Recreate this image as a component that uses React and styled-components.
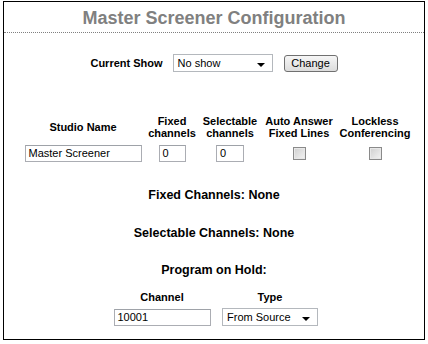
import React from "react";
import styled, { createGlobalStyle } from "styled-components";

const GlobalStyle = createGlobalStyle`
  body {
    margin: 0;
    background: #fff;
    font-family: "Liberation Sans", Arial, sans-serif;
    font-size: 11px;
    color: #000;
  }
`;

const Frame = styled.div`
  width: 420px;
  height: 337px;
  margin: 1px 0 0 3px;
  border: 1px solid #000;
  background: #fff;
`;

const Title = styled.h1`
  margin: 0;
  padding: 5px 0 3px;
  font-size: 18px;
  line-height: 22px;
  font-weight: bold;
  color: #808080;
  text-align: center;
  border-bottom: 1px dotted #808080;
`;

const ShowRow = styled.div`
  display: flex;
  justify-content: center;
  align-items: center;
  gap: 10px;
  margin-top: 21px;
  height: 18px;
`;

const Label = styled.span`
  font-weight: bold;
  font-size: 11px;
`;

const SelectBox = styled.div`
  position: relative;
  width: ${(p) => p.$width}px;
  height: 18px;
  box-sizing: border-box;
  border: 1px solid #b4b8bd;
  background: #fff;
  display: flex;
  align-items: center;
  padding-left: 4px;
  font-size: 11px;
`;

const Arrow = styled.span`
  position: absolute;
  right: 7px;
  top: 8px;
  width: 0;
  height: 0;
  border-left: 4px solid transparent;
  border-right: 4px solid transparent;
  border-top: 4px solid #000;
`;

const Button = styled.button`
  height: 17px;
  width: 54px;
  margin-left: 1px;
  padding: 0;
  font-family: inherit;
  font-size: 11px;
  color: #000;
  border: 1px solid #707070;
  border-radius: 3px;
  background: linear-gradient(#f6f6f6, #dcdcdc);
`;

const Grid = styled.div`
  display: grid;
  grid-template-columns: 126px 52px 64px 74px 78px;
  grid-template-rows: 26px 17px;
  row-gap: 5px;
  margin: 42px 0 0 16px;
  align-items: center;
  justify-items: center;
`;

const Head = styled.div`
  font-weight: bold;
  font-size: 11px;
  line-height: 12px;
  text-align: center;
`;

const TextInput = styled.div`
  width: ${(p) => p.$width}px;
  height: 17px;
  box-sizing: border-box;
  border: 1px solid #abadb3;
  border-top-color: #9ea2a8;
  background: #fff;
  padding-left: 3px;
  font-size: 11px;
  line-height: 15px;
`;

const Check = styled.span`
  width: 13px;
  height: 13px;
  box-sizing: border-box;
  border: 1px solid #8a8a8a;
  background: linear-gradient(135deg, #cfcfcf, #f4f4f4);
  box-shadow: inset 0 0 0 1px #e8e8e8;
`;

const Section = styled.h2`
  margin: ${(p) => p.$top}px 0 0;
  font-size: 12.5px;
  line-height: 16px;
  font-weight: bold;
  text-align: center;
`;

const HoldGrid = styled.div`
  display: grid;
  grid-template-columns: 108px 108px;
  grid-template-rows: 14px 18px;
  row-gap: 4px;
  justify-content: center;
  justify-items: center;
  align-items: center;
  margin: 12px 0 0 4px;
`;

export default function App() {
  return (
    <>
      <GlobalStyle />
      <Frame>
        <Title>Master Screener Configuration</Title>
        <ShowRow>
          <Label>Current Show</Label>
          <SelectBox $width={100}>
            No show
            <Arrow />
          </SelectBox>
          <Button>Change</Button>
        </ShowRow>
        <Grid>
          <Head>Studio Name</Head>
          <Head>
            Fixed
            <br />
            channels
          </Head>
          <Head>
            Selectable
            <br />
            channels
          </Head>
          <Head>
            Auto Answer
            <br />
            Fixed Lines
          </Head>
          <Head>
            Lockless
            <br />
            Conferencing
          </Head>
          <TextInput $width={117}>Master Screener</TextInput>
          <TextInput $width={27}>0</TextInput>
          <TextInput $width={28}>0</TextInput>
          <Check />
          <Check />
        </Grid>
        <Section $top={25}>Fixed Channels: None</Section>
        <Section $top={22}>Selectable Channels: None</Section>
        <Section $top={21}>Program on Hold:</Section>
        <HoldGrid>
          <Head>Channel</Head>
          <Head>Type</Head>
          <TextInput $width={97}>10001</TextInput>
          <SelectBox $width={96}>
            From Source
            <Arrow />
          </SelectBox>
        </HoldGrid>
      </Frame>
    </>
  );
}
